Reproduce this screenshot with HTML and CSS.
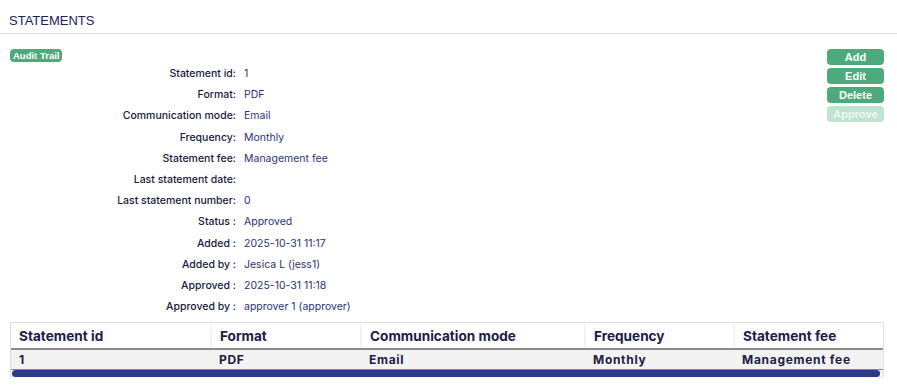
FILE: index.html
```html
<!DOCTYPE html>
<html lang="en">

<head>
	<meta charset="utf-8">
	<title>Statements</title>
	<link rel="stylesheet" href="styles.css">
</head>

<body>
	<div class="title-bar">
		<h2>STATEMENTS</h2>
	</div>

	<div class="panel">
		<div class="details">
			<span class="badge">Audit Trail</span>
			<div class="fields">
				<span class="lbl">Statement id:</span><span class="val">1</span>
				<span class="lbl">Format:</span><span class="val">PDF</span>
				<span class="lbl">Communication mode:</span><span class="val">Email</span>
				<span class="lbl">Frequency:</span><span class="val">Monthly</span>
				<span class="lbl">Statement fee:</span><span class="val">Management fee</span>
				<span class="lbl">Last statement date:</span><span class="val"></span>
				<span class="lbl">Last statement number:</span><span class="val">0</span>
				<span class="lbl">Status :</span><span class="val">Approved</span>
				<span class="lbl">Added :</span><span class="val">2025-10-31 11:17</span>
				<span class="lbl">Added by :</span><span class="val">Jesica L (jess1)</span>
				<span class="lbl">Approved :</span><span class="val">2025-10-31 11:18</span>
				<span class="lbl">Approved by :</span><span class="val">approver 1 (approver)</span>
			</div>
		</div>
		<div class="actions">
			<button class="btn">Add</button>
			<button class="btn">Edit</button>
			<button class="btn">Delete</button>
			<button class="btn" disabled>Approve</button>
		</div>
	</div>

	<div class="grid-wrap">
		<table class="grid">
			<thead>
				<tr>
					<th class="c1">Statement id</th>
					<th class="c2">Format</th>
					<th class="c3">Communication mode</th>
					<th class="c4">Frequency</th>
					<th class="c5">Statement fee</th>
				</tr>
			</thead>
			<tbody>
				<tr>
					<td>1</td>
					<td>PDF</td>
					<td>Email</td>
					<td>Monthly</td>
					<td>Management fee</td>
				</tr>
			</tbody>
		</table>
		<div class="scroll"><div class="thumb"></div></div>
	</div>
</body>

</html>
```

FILE: styles.css
```css
body {
	margin: 0;
	font-family: Inter, "Noto Sans", sans-serif;
	color: #1c2045;
	background: #fff;
}

.title-bar {
	padding: 13px 9px 5px;
	border-bottom: 1px solid #dcdcdc;
}

.title-bar h2 {
	margin: 0;
	font-family: "Liberation Sans", Arial, sans-serif;
	font-size: 13px;
	font-weight: normal;
	line-height: 15px;
	color: #1e2157;
}

.panel {
	display: flex;
	justify-content: space-between;
	padding: 15px 13px 0 10px;
}

.details {
	display: flex;
	flex-direction: column;
	align-items: flex-start;
}

.badge {
	display: block;
	background: #4caa7c;
	color: #fff;
	font-family: "Liberation Sans", Arial, sans-serif;
	font-weight: bold;
	font-size: 9.5px;
	line-height: 13px;
	padding: 0 3px;
	border-radius: 4px;
}

.fields {
	display: grid;
	grid-template-columns: 226px auto;
	column-gap: 8px;
	grid-auto-rows: 21.2px;
	align-items: center;
	font-size: 10.5px;
	margin-top: 1px;
}

.lbl {
	text-align: right;
	font-weight: 500;
	color: #151a3d;
}

.val {
	color: #2a3472;
}

.actions {
	display: flex;
	flex-direction: column;
	gap: 3px;
}

.btn {
	width: 57px;
	height: 16px;
	padding: 0;
	border: none;
	border-radius: 4px;
	background: #4caa7c;
	color: #fff;
	font-family: "Liberation Sans", Arial, sans-serif;
	font-weight: bold;
	font-size: 11px;
}

.btn:disabled {
	background: #c0e2d1;
	color: #eef7f2;
}

.grid-wrap {
	margin: 5px 13px 0 10px;
	border: 1px solid #dedede;
	border-bottom: none;
}

.grid {
	width: 100%;
	border-collapse: collapse;
	table-layout: fixed;
}

.grid th {
	text-align: left;
	font-size: 13.6px;
	font-weight: 700;
	height: 25px;
	padding: 0 8px;
	color: #1c2045;
	border-bottom: 2px solid #8a8a8a;
	border-right: 2px solid #f2f2f2;
}

.grid th:last-child {
	border-right: none;
}

.c1 { width: 183px; }
.c2 { width: 132px; }
.c3 { width: 206px; }
.c4 { width: 131px; }

.grid td {
	font-size: 12px;
	font-weight: 700;
	letter-spacing: 0.7px;
	height: 19px;
	padding: 0 8px;
	background: #f2f2f2;
	border-bottom: 1px solid #8a8a8a;
}

.scroll {
	height: 8px;
	padding: 0 3px 0 1px;
	background: #f4f4f6;
}

.thumb {
	height: 7px;
	background: #2b3a8a;
	border-radius: 4px;
}
```
